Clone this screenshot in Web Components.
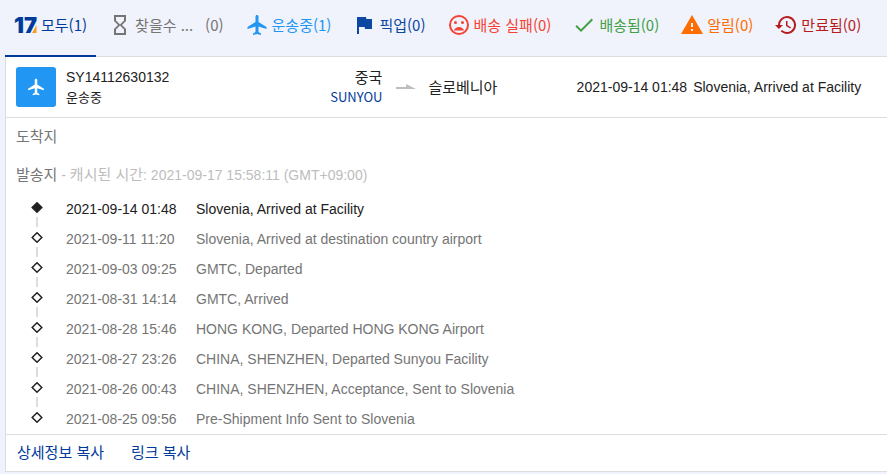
<!DOCTYPE html>
<html lang="ko">
<head>
<meta charset="utf-8">
<meta name="viewport" content="width=device-width, initial-scale=1">
<title>17TRACK</title>
<style>
  :root {
    --brand: #003a9b;
    --text: #212121;
    --muted: #757575;
    --faint: #bdbdbd;
    --line: #dddddd;
    --page: #f0f3fb;
    --ko: "Noto Sans CJK KR", sans-serif;
  }
  body {
    margin: 0;
    background: var(--page);
    color: var(--text);
    font: 14px/20px "Liberation Sans", "Noto Sans CJK KR", sans-serif;
  }
</style>
</head>
<body>
<tracking-page></tracking-page>

<script>
const ICONS = {
  hourglass: '<path d="M6 2v6l4 4-4 4v6h12v-6l-4-4 4-4V2H6zm10 14.500V20H8v-3.500l4-4 4 4zm-4-5l-4-4V4h8v3.500l-4 4z"/>',
  plane: '<path d="M21.500 16v-2l-8-5V3.500C13.500 2.670 12.830 2 12 2s-1.500.670-1.500 1.500V9l-8 5v2l8-2.500V19l-2.500 1.500V22l4-1 4 1v-1.500L13.500 19v-5.500l8 2.500z"/>',
  flag: '<path d="M14.400 6L14 4H5v17h2v-7h5.600l.400 2h7V6z"/>',
  sad: '<path d="M12 2a10 10 0 1 0 0 20 10 10 0 0 0 0-20zm0 18a8 8 0 1 1 0-16 8 8 0 0 1 0 16zm0-6c-2.330 0-4.320 1.450-5.120 3.500h10.240c-.800-2.050-2.790-3.500-5.120-3.500z"/><circle cx="8.500" cy="9.500" r="1.500"/><circle cx="15.500" cy="9.500" r="1.500"/>',
  check: '<path d="M9 16.170L4.830 12l-1.420 1.410L9 19 21 7l-1.410-1.410z"/>',
  warning: '<path d="M1 21h22L12 2 1 21zm12-3h-2v-2h2v2zm0-4h-2v-4h2v4z"/>',
  history: '<path d="M13 3a9 9 0 0 0-9 9H1l3.890 3.890.070.140L9 12H6a7 7 0 1 1 2.060 4.940l-1.420 1.420A9 9 0 1 0 13 3zm-1 5v5l4.280 2.540.720-1.210-3.500-2.080V8H12z"/>'
};

class TrackIcon extends HTMLElement {
  constructor() {
    super();
    this.shadowDOM = this.attachShadow({ mode: "open" });
  }

  connectedCallback() {
    this.shadowDOM.innerHTML = `
      <style>
        :host { display: block; flex: none; width: 24px; height: 24px; }
        svg { display: block; width: 100%; height: 100%; fill: currentColor; }
      </style>
      <svg viewBox="0 0 24 24" aria-hidden="true">${ICONS[this.getAttribute("name")]}</svg>
    `;
  }
}

class BrandLogo extends HTMLElement {
  constructor() {
    super();
    this.shadowDOM = this.attachShadow({ mode: "open" });
  }

  connectedCallback() {
    this.shadowDOM.innerHTML = `
      <style>
        :host { display: block; flex: none; width: 24px; height: 24px; }
        svg { display: block; overflow: visible; }
        text { font: 900 22px Inter, "Liberation Sans", sans-serif; fill: #003a9b; }
      </style>
      <svg width="24" height="24" viewBox="0 0 24 24" aria-hidden="true">
        <text x="0" y="20">17</text>
        <path d="M22.500 12v8h-4.500z" fill="#ff9a1f"/>
      </svg>
    `;
  }
}

class StatusTab extends HTMLElement {
  constructor() {
    super();
    this.shadowDOM = this.attachShadow({ mode: "open" });
  }

  connectedCallback() {
    const icon = this.getAttribute("icon");
    const active = this.hasAttribute("active");
    this.shadowDOM.innerHTML = `
      <style>
        :host { display: flex; flex: none; }
        button {
          display: flex;
          align-items: center;
          gap: 3px;
          padding: 0 9px 6px;
          border: 0;
          border-bottom: 2px solid transparent;
          background: none;
          color: inherit;
          font: 15px/20px var(--ko);
          white-space: nowrap;
          cursor: pointer;
        }
        :host([active]) button { border-color: var(--brand); }
        :host([clipped]) .label { width: 70px; overflow: hidden; text-align: left; }
        .text { display: flex; }
      </style>
      <button type="button" role="tab" aria-selected="${active}">
        ${icon ? `<track-icon name="${icon}"></track-icon>` : "<brand-logo></brand-logo>"}
        <span class="text"><span class="label"><slot></slot></span><span>(${this.getAttribute("count")})</span></span>
      </button>
    `;
  }
}

class StatusTabs extends HTMLElement {
  constructor() {
    super();
    this.shadowDOM = this.attachShadow({ mode: "open" });
  }

  connectedCallback() {
    this.shadowDOM.innerHTML = `
      <style>
        :host { display: block; margin-left: 5px; }
        div {
          display: flex;
          gap: 3px;
          height: 57px;
          box-shadow: inset 0 -1px var(--line);
        }
      </style>
      <div role="tablist"><slot></slot></div>
    `;
  }
}

class TrackSummary extends HTMLElement {
  constructor() {
    super();
    this.shadowDOM = this.attachShadow({ mode: "open" });
  }

  connectedCallback() {
    this.shadowDOM.innerHTML = `
      <style>
        :host {
          display: grid;
          grid-template-columns: 40px 34fr 20px 16fr 31fr;
          align-items: center;
          padding: 10px 0 10px 10px;
          border-bottom: 1px solid var(--line);
        }
        .badge {
          display: grid;
          place-items: center;
          height: 40px;
          border-radius: 3px;
          background: #2196f3;
          color: #fff;
        }
        .badge track-icon { width: 20px; height: 20px; }
        .parcel { display: flex; justify-content: space-between; padding: 0 14px 0 10px; }
        .from { text-align: right; }
        .place { font: 15px/20px var(--ko); }
        .small { font: 13px/20px var(--ko); }
        .to { padding-left: 12px; }
        .arrow { display: block; fill: var(--faint); }
        .latest { display: flex; gap: 6px; white-space: nowrap; }
        a { color: var(--brand); text-decoration: none; }
      </style>
      <div class="badge"><track-icon name="plane"></track-icon></div>
      <div class="parcel">
        <div>
          <div>SY14112630132</div>
          <div class="small">운송중</div>
        </div>
        <div class="from">
          <div class="place">중국</div>
          <div class="small"><a href="#sunyou">SUNYOU</a></div>
        </div>
      </div>
      <svg class="arrow" width="20" height="6" viewBox="0 0 20 6" aria-hidden="true"><path d="M0 3h10V0l10 5H0z"/></svg>
      <div class="place to">슬로베니아</div>
      <div class="latest"><time>2021-09-14 01:48</time><span>Slovenia, Arrived at Facility</span></div>
    `;
  }
}

class TrackEvent extends HTMLElement {
  constructor() {
    super();
    this.shadowDOM = this.attachShadow({ mode: "open" });
  }

  connectedCallback() {
    this.shadowDOM.innerHTML = `
      <style>
        :host {
          display: grid;
          grid-template-columns: 42px 8px 130px 1fr;
          min-height: 30px;
          color: var(--muted);
        }
        :host([latest]) { color: var(--text); }
        :host([first]) { min-height: 20px; }
        .marker { display: flex; flex-direction: column; align-items: center; gap: 4px; padding-top: 3px; }
        .marker svg { display: block; fill: #fff; stroke: #212121; stroke-width: 1.500; }
        :host([latest]) svg { fill: #212121; }
        .marker i { width: 2px; height: 10px; background: var(--line); }
        :host([first]) i { display: none; }
        time { grid-column: 3; }
      </style>
      <div class="marker">
        <svg width="12" height="11" viewBox="0 0 12 11" aria-hidden="true"><path d="M6 .8l4.800 4.700L6 10.200 1.200 5.500z"/></svg>
        <i></i>
      </div>
      <time>${this.getAttribute("time")}</time>
      <span><slot></slot></span>
    `;
  }
}

class TrackDetails extends HTMLElement {
  constructor() {
    super();
    this.shadowDOM = this.attachShadow({ mode: "open" });
  }

  connectedCallback() {
    this.shadowDOM.innerHTML = `
      <style>
        :host { display: block; padding: 9px 10px 5px; color: var(--muted); }
        p { margin: 0 0 18px; }
        .origin { margin-bottom: 14px; }
        .ko { font-family: var(--ko); font-size: 15px; line-height: 16px; }
        .cached { color: var(--faint); }
      </style>
      <p><span class="ko">도착지</span></p>
      <p class="origin"><span class="ko">발송지</span> <span class="cached">- <span class="ko">캐시된 시간</span>: 2021-09-17 15:58:11 (GMT+09:00)</span></p>
      <div role="list"><slot></slot></div>
    `;
  }
}

class TrackActions extends HTMLElement {
  constructor() {
    super();
    this.shadowDOM = this.attachShadow({ mode: "open" });
  }

  connectedCallback() {
    this.shadowDOM.innerHTML = `
      <style>
        :host { display: flex; gap: 27px; padding: 7px 11px 9px; border-top: 1px solid var(--line); }
        button {
          padding: 0;
          border: 0;
          background: none;
          color: var(--brand);
          font: 15px/20px var(--ko);
          cursor: pointer;
        }
      </style>
      <button type="button">상세정보 복사</button>
      <button type="button">링크 복사</button>
    `;
  }
}

class TrackingPage extends HTMLElement {
  constructor() {
    super();
    this.shadowDOM = this.attachShadow({ mode: "open" });
  }

  connectedCallback() {
    this.shadowDOM.innerHTML = `
      <style>
        :host { display: block; overflow: hidden; }
        article {
          margin-left: 5px;
          border: solid var(--line);
          border-width: 0 0 1px 1px;
          background: #fff;
        }
        .all { color: #003a9b; }
        .missing { color: #757575; }
        .transit { color: #2196f3; }
        .pickup { color: #0d47a1; }
        .failed { color: #f44336; }
        .delivered { color: #43a047; }
        .alert { color: #ff6d00; }
        .expired { color: #b71c1c; }
      </style>
      <status-tabs>
        <status-tab class="all" count="1" active>모두</status-tab>
        <status-tab class="missing" icon="hourglass" count="0" clipped>찾을수 ...</status-tab>
        <status-tab class="transit" icon="plane" count="1">운송중</status-tab>
        <status-tab class="pickup" icon="flag" count="0">픽업</status-tab>
        <status-tab class="failed" icon="sad" count="0">배송 실패</status-tab>
        <status-tab class="delivered" icon="check" count="0">배송됨</status-tab>
        <status-tab class="alert" icon="warning" count="0">알림</status-tab>
        <status-tab class="expired" icon="history" count="0">만료됨</status-tab>
      </status-tabs>
      <article>
        <track-summary></track-summary>
        <track-details>
          <track-event role="listitem" time="2021-09-14 01:48" latest>Slovenia, Arrived at Facility</track-event>
          <track-event role="listitem" time="2021-09-11 11:20">Slovenia, Arrived at destination country airport</track-event>
          <track-event role="listitem" time="2021-09-03 09:25">GMTC, Departed</track-event>
          <track-event role="listitem" time="2021-08-31 14:14">GMTC, Arrived</track-event>
          <track-event role="listitem" time="2021-08-28 15:46">HONG KONG, Departed HONG KONG Airport</track-event>
          <track-event role="listitem" time="2021-08-27 23:26">CHINA, SHENZHEN, Departed Sunyou Facility</track-event>
          <track-event role="listitem" time="2021-08-26 00:43">CHINA, SHENZHEN, Acceptance, Sent to Slovenia</track-event>
          <track-event role="listitem" time="2021-08-25 09:56" first>Pre-Shipment Info Sent to Slovenia</track-event>
        </track-details>
        <track-actions></track-actions>
      </article>
    `;
  }
}

customElements.define("track-icon", TrackIcon);
customElements.define("brand-logo", BrandLogo);
customElements.define("status-tab", StatusTab);
customElements.define("status-tabs", StatusTabs);
customElements.define("track-summary", TrackSummary);
customElements.define("track-event", TrackEvent);
customElements.define("track-details", TrackDetails);
customElements.define("track-actions", TrackActions);
customElements.define("tracking-page", TrackingPage);
</script>
</body>
</html>
